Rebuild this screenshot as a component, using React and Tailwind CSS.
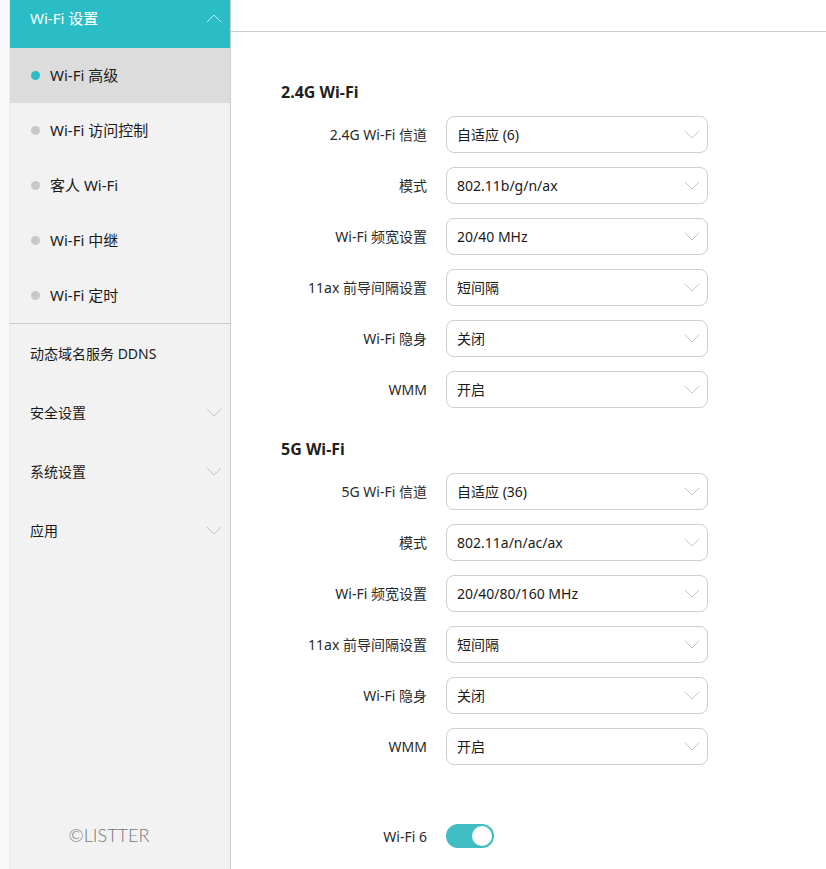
import React from "react";

const font = "font-['Noto_Sans','Noto_Sans_CJK_SC',sans-serif]";

function ChevronDown({ className }) {
  return (
    <svg width="16" height="9" viewBox="0 0 16 9" fill="none" className={className}>
      <polyline points="1,1 8,8 15,1" stroke="currentColor" strokeWidth="1" />
    </svg>
  );
}

function ChevronUp({ className }) {
  return (
    <svg width="16" height="9" viewBox="0 0 16 9" fill="none" className={className}>
      <polyline points="1,8 8,1 15,8" stroke="currentColor" strokeWidth="1" />
    </svg>
  );
}

const subItems = ["Wi-Fi 高级", "Wi-Fi 访问控制", "客人 Wi-Fi", "Wi-Fi 中继", "Wi-Fi 定时"];

const groups = [
  { label: "动态域名服务 DDNS", arrow: false },
  { label: "安全设置", arrow: true },
  { label: "系统设置", arrow: true },
  { label: "应用", arrow: true },
];

const wifi24 = [
  ["2.4G Wi-Fi 信道", "自适应 (6)"],
  ["模式", "802.11b/g/n/ax"],
  ["Wi-Fi 频宽设置", "20/40 MHz"],
  ["11ax 前导间隔设置", "短间隔"],
  ["Wi-Fi 隐身", "关闭"],
  ["WMM", "开启"],
];

const wifi5 = [
  ["5G Wi-Fi 信道", "自适应 (36)"],
  ["模式", "802.11a/n/ac/ax"],
  ["Wi-Fi 频宽设置", "20/40/80/160 MHz"],
  ["11ax 前导间隔设置", "短间隔"],
  ["Wi-Fi 隐身", "关闭"],
  ["WMM", "开启"],
];

function Row({ label, value }) {
  return (
    <div className="flex items-center gap-[19px]">
      <div className="w-[146px] text-right text-[14px] text-[#2a2a2a]">{label}</div>
      <div className="w-[262px] h-[37px] rounded-[8px] border border-[#cfcfcf] flex items-center justify-between pl-[10px] pr-[7px] text-[14px] text-[#1a1a1a]">
        <span>{value}</span>
        <ChevronDown className="text-[#c4c4c4]" />
      </div>
    </div>
  );
}

function Section({ title, rows, className }) {
  return (
    <div className={className}>
      <h2 className="text-[16px] font-bold text-[#1f1f1f] leading-[22px]">{title}</h2>
      <div className="mt-[13px] flex flex-col gap-[14px]">
        {rows.map(([l, v]) => (
          <Row key={l + v} label={l} value={v} />
        ))}
      </div>
    </div>
  );
}

export default function App() {
  return (
    <div className={`flex w-[826px] h-[869px] overflow-hidden bg-white ${font}`}>
      <div className="w-[10px] bg-[#f9f9f9] border-r border-[#ececec]" />
      <aside className="w-[221px] shrink-0 bg-[#f2f2f2] border-r border-[#cccccc] flex flex-col">
        <div className="h-[48px] bg-[#2bbdc5] flex items-start justify-between pt-[7px] pl-[20px] pr-[8px] text-white text-[15px] leading-[22px]">
          <span>Wi-Fi 设置</span>
          <ChevronUp className="text-[#bfeff2] mt-[7px]" />
        </div>
        <div className="flex flex-col border-b border-[#cccccc]">
          {subItems.map((s, i) => (
            <div
              key={s}
              className={`h-[55px] flex items-center pl-[21px] gap-[10px] text-[15px] text-[#1a1a1a] ${i === 0 ? "bg-[#dcdcdc]" : ""}`}
            >
              <span className={`w-[9px] h-[9px] rounded-full ${i === 0 ? "bg-[#2bbdc5]" : "bg-[#c8c8c8]"}`} />
              <span>{s}</span>
            </div>
          ))}
        </div>
        <div className="flex flex-col">
          {groups.map((g) => (
            <div key={g.label} className="h-[59px] flex items-center justify-between pl-[20px] pr-[8px] text-[14px] text-[#1a1a1a]">
              <span>{g.label}</span>
              {g.arrow && <ChevronDown className="text-[#c4c4c4]" />}
            </div>
          ))}
        </div>
        <div className="mt-auto mb-[20px] pr-[22px] text-center text-[18px] font-light text-[#777] font-['Lato',sans-serif]">
          ©LISTTER
        </div>
      </aside>
      <main className="flex-1 flex flex-col">
        <div className="h-[32px] border-b border-[#cccccc] shrink-0" />
        <div className="pl-[50px]">
          <Section title="2.4G Wi-Fi" rows={wifi24} className="mt-[49px]" />
          <Section title="5G Wi-Fi" rows={wifi5} className="mt-[30px]" />
          <div className="mt-[59px] flex items-center gap-[19px]">
            <div className="w-[146px] text-right text-[14px] text-[#2a2a2a]">Wi-Fi 6</div>
            <button className="w-[48px] h-[24px] rounded-full bg-[#3fbdc2] flex items-center justify-end pr-[2px]">
              <span className="w-[20px] h-[20px] rounded-full bg-white" />
            </button>
          </div>
        </div>
      </main>
    </div>
  );
}
